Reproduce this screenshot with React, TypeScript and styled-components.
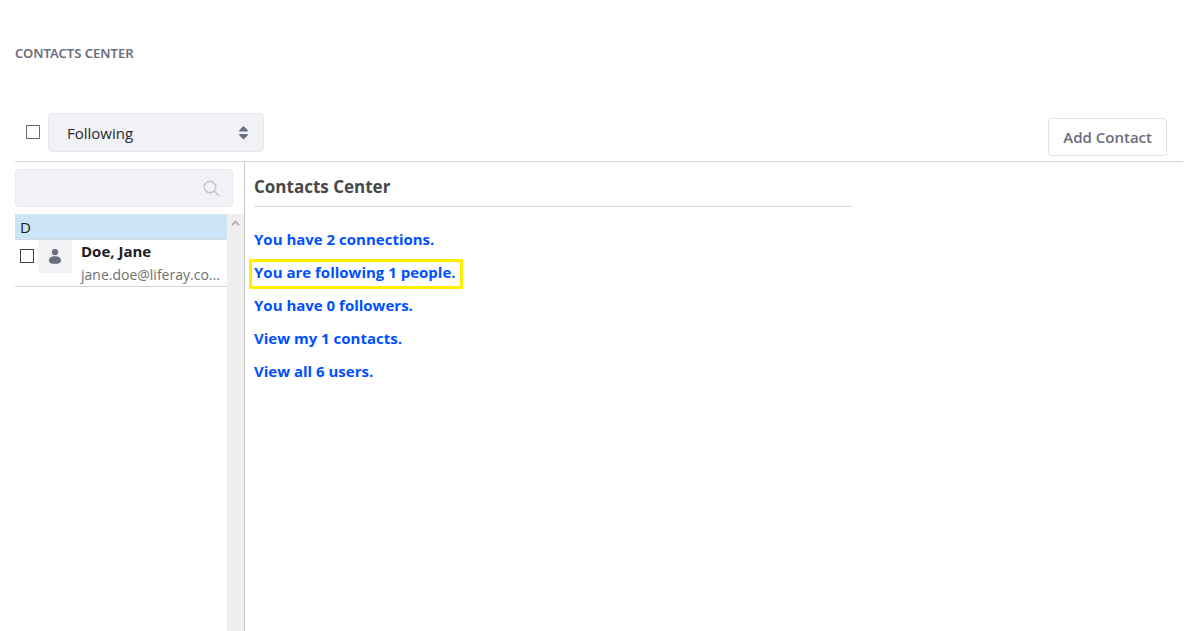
import React from "react";
import styled, { createGlobalStyle } from "styled-components";

const GlobalStyle = createGlobalStyle`
  *, *::before, *::after { box-sizing: border-box; }
  body {
    margin: 0;
    background: #fff;
    color: #1c1c24;
    font-family: "Segoe UI", "Open Sans", "Noto Sans", sans-serif;
    font-size: 15px;
    line-height: 24px;
  }
`;

const Page = styled.div`
  display: flex;
  flex-direction: column;
  min-height: 100vh;
  padding: 41px 5px 0 15px;
`;

const PortletTitle = styled.h1`
  margin: 0;
  font-family: "Noto Sans", sans-serif;
  font-size: 13px;
  line-height: 24px;
  font-weight: 600;
  text-transform: uppercase;
  color: #6b6c7e;
`;

const Toolbar = styled.div`
  display: flex;
  align-items: flex-start;
  margin-top: 48px;
  padding: 0 16px 5px 11px;
  border-bottom: 1px solid #d3d3d3;
`;

const Checkbox = styled.input.attrs({ type: "checkbox" })`
  appearance: none;
  flex: none;
  width: 14px;
  height: 14px;
  margin: 0;
  border: 1px solid #444;
  background: #fff;
  &:checked { background: #0b5fff; }
`;

const ToolbarCheck = styled(Checkbox)`
  margin: 12px 8px 0 0;
  border-color: #6a6a6a;
`;

const SelectWrap = styled.div`
  display: grid;
  align-items: center;
  width: 216px;
  & > * { grid-area: 1 / 1; }
  svg { justify-self: end; margin-right: 16px; pointer-events: none; }
`;

const Select = styled.select`
  appearance: none;
  width: 100%;
  height: 39px;
  padding: 1px 36px 0 18px;
  border: 1px solid #e7e7ed;
  border-radius: 4px;
  background: #f1f2f5;
  color: #272833;
  font: inherit;
`;

const AddButton = styled.button`
  height: 38px;
  margin: 5px 0 0 auto;
  padding: 0 14px;
  border: 1px solid #e0e0e8;
  border-radius: 4px;
  background: #fff;
  color: #6b6c7e;
  font: inherit;
  font-weight: 600;
`;

const Columns = styled.div`
  display: flex;
  flex: 1;
`;

const Sidebar = styled.aside`
  display: flex;
  flex-direction: column;
  flex: none;
  width: 230px;
  border-right: 1px solid #c8c8c8;
`;

const SearchBox = styled.label`
  display: flex;
  align-items: center;
  height: 38px;
  margin: 7px 11px 7px 0;
  padding: 0 12px;
  border: 1px solid #e7e7ed;
  border-radius: 4px;
  background: #f1f2f5;
`;

const SearchInput = styled.input`
  flex: 1;
  min-width: 0;
  border: 0;
  outline: 0;
  background: transparent;
  font: inherit;
`;

const ListArea = styled.div`
  display: flex;
  flex: 1;
`;

const ContactList = styled.div`
  flex: 1;
  min-width: 0;
`;

const Letter = styled.h2`
  margin: 0;
  height: 26px;
  padding: 1px 5px 0;
  border-bottom: 1px solid #d3d9de;
  background: #cce5f6;
  font-size: 15px;
  line-height: 24px;
  font-weight: 400;
`;

const ContactRow = styled.div`
  display: flex;
  height: 47px;
  padding-left: 5px;
  border-bottom: 1px solid #d3d3d3;
`;

const RowCheck = styled(Checkbox)`
  margin: 9px 4px 0 0;
`;

const Avatar = styled.div`
  display: flex;
  flex: none;
  align-items: center;
  justify-content: center;
  width: 34px;
  height: 33px;
  margin-right: 9px;
  background: #f1f2f5;
`;

const Person = styled.div`
  min-width: 0;
  line-height: 23px;
`;

const Name = styled.div`
  font-weight: 700;
`;

const Email = styled.div`
  font-size: 14px;
  white-space: nowrap;
  color: #707070;
`;

const ScrollTrack = styled.div`
  flex: none;
  width: 17px;
  background: #eee;
`;

const ScrollUp = styled.button`
  display: flex;
  align-items: center;
  justify-content: center;
  width: 16px;
  height: 17px;
  padding: 0;
  border: 0;
  background: transparent;
`;

const Main = styled.main`
  flex: 1;
  padding: 9px;
`;

const Heading = styled.h2`
  width: 65%;
  margin: 0 0 17px;
  padding: 4px 0 7px;
  border-bottom: 1px solid #d8d8d8;
  font-size: 17px;
  line-height: 24px;
  font-weight: 700;
  color: #484848;
`;

const Links = styled.ul`
  margin: 0;
  padding: 0;
  list-style: none;
`;

const LinkItem = styled.li`
  display: flex;
  height: 33px;
  align-items: center;
`;

const SummaryLink = styled.a<{ $marked?: boolean }>`
  margin-left: -5px;
  padding: 0 4px 4px 2px;
  border: 3px solid ${(p) => (p.$marked ? "#fff000" : "transparent")};
  color: #0050ff;
  line-height: 20px;
  font-weight: 700;
  text-decoration: none;
`;

const summary = [
  { text: "You have 2 connections." },
  { text: "You are following 1 people.", marked: true },
  { text: "You have 0 followers." },
  { text: "View my 1 contacts." },
  { text: "View all 6 users." },
];

export default function App() {
  return (
    <>
      <GlobalStyle />
      <Page>
        <PortletTitle>Contacts Center</PortletTitle>
        <Toolbar>
          <ToolbarCheck aria-label="Select all contacts" />
          <SelectWrap>
            <Select aria-label="Filter contacts" defaultValue="Following">
              <option>Following</option>
            </Select>
            <svg width="9" height="14" viewBox="0 0 9 14" fill="#6b6c7e" aria-hidden="true">
              <path d="M4.5 0 9 4.5Q9 5.5 8 5.5H1Q0 5.5 0 4.5ZM4.5 13.5 9 9Q9 8 8 8H1Q0 8 0 9Z" />
            </svg>
          </SelectWrap>
          <AddButton type="button">Add Contact</AddButton>
        </Toolbar>
        <Columns>
          <Sidebar>
            <SearchBox>
              <SearchInput type="text" aria-label="Search contacts" />
              <svg width="17" height="17" viewBox="0 0 17 17" fill="none" stroke="#c2c2c4" strokeWidth="1.4" aria-hidden="true">
                <circle cx="7" cy="7" r="5.8" />
                <path d="m11.2 11.2 4.8 4.6" />
              </svg>
            </SearchBox>
            <ListArea>
              <ContactList>
                <Letter>D</Letter>
                <ContactRow>
                  <RowCheck aria-label="Select Doe, Jane" />
                  <Avatar>
                    <svg width="12" height="15" viewBox="0 0 12 15" fill="#6b6c7e" aria-hidden="true">
                      <circle cx="6" cy="3.2" r="3.1" />
                      <path d="M6 7.3c3.6 0 6 1.5 6 4.1 0 2-1.5 3.4-6 3.4S0 13.4 0 11.4C0 8.8 2.4 7.3 6 7.3Z" />
                    </svg>
                  </Avatar>
                  <Person>
                    <Name>Doe, Jane</Name>
                    <Email>jane.doe@liferay.co...</Email>
                  </Person>
                </ContactRow>
              </ContactList>
              <ScrollTrack>
                <ScrollUp type="button" aria-label="Scroll up">
                  <svg width="9" height="6" viewBox="0 0 9 6" fill="none" stroke="#b0b0b0" strokeWidth="1.8" aria-hidden="true">
                    <path d="M1 5.2 4.5 1.5 8 5.2" />
                  </svg>
                </ScrollUp>
              </ScrollTrack>
            </ListArea>
          </Sidebar>
          <Main>
            <Heading>Contacts Center</Heading>
            <Links>
              {summary.map((item) => (
                <LinkItem key={item.text}>
                  <SummaryLink href="#" $marked={item.marked}>{item.text}</SummaryLink>
                </LinkItem>
              ))}
            </Links>
          </Main>
        </Columns>
      </Page>
    </>
  );
}
